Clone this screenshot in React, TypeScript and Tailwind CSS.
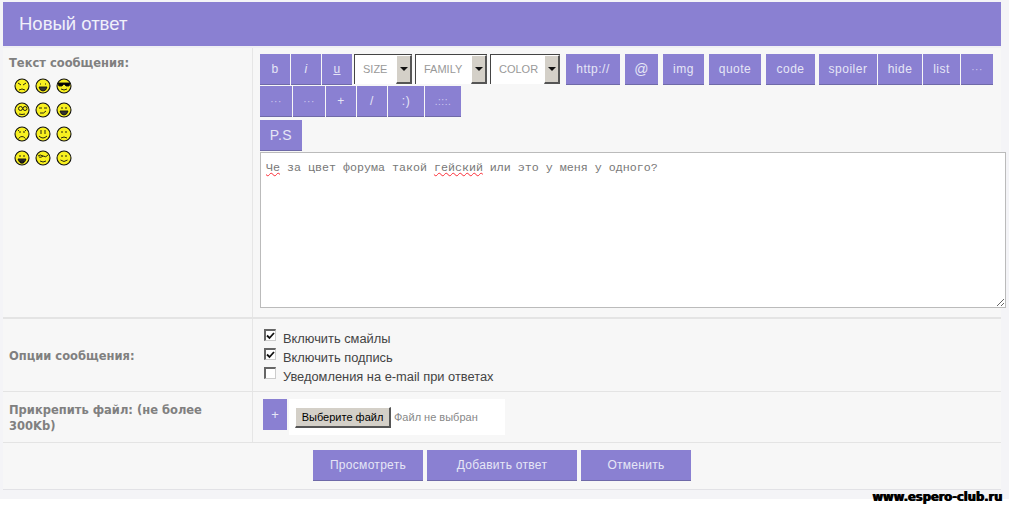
import type { ReactNode } from "react"

const btn =
  "flex h-[31px] shrink-0 items-center justify-center bg-[#8a80d2] border-b border-b-[#6f6aa8] text-[12px] tracking-[0.5px] text-[#e6e6f6]"

function Btn({ w, children }: { w: string; children: ReactNode }) {
  return <div className={`${btn} ${w}`}>{children}</div>
}

function Dim({ children }: { children: ReactNode }) {
  return <span className="text-[10px] text-[#cfcbf0]">{children}</span>
}

function FakeSelect({ w, label }: { w: string; label: string }) {
  return (
    <div className={`flex h-[30px] shrink-0 border-t border-l border-t-[#444] border-l-[#444] bg-white ${w}`}>
      <div className="flex flex-1 items-center pl-[8px] text-[11px] text-[#999]">{label}</div>
      <div className="flex w-[16px] items-center justify-center border-r-2 border-b-2 border-t border-l border-t-white border-l-white border-r-[#555] border-b-[#555] bg-[#d4d0c8]">
        <svg width="8" height="4" viewBox="0 0 8 4">
          <path d="M0 0h8L4 4z" fill="#111" />
        </svg>
      </div>
    </div>
  )
}

type Face = { eyes: string; mouth: string; extra?: string }

const faces: Face[] = [
  { eyes: "M4 5l3 2M12 5l-3 2", mouth: "M5 12q3-2 6 0" },
  { eyes: "M5 6h1M10 6h1", mouth: "M4 9h8q-1 4-4 4t-4-4z" },
  { eyes: "M2 5h12v1l-1 2h-3l-2-2-2 2H3L2 6z", mouth: "M5 11q3 2 6 0", extra: "#000" },
  { eyes: "M6.5 6.5m-2 0a2 2 0 1 0 4 0a2 2 0 1 0-4 0M11 6.5m-2 0a2 2 0 1 0 4 0a2 2 0 1 0-4 0", mouth: "M5 12q3 1 6 0" },
  { eyes: "M4 6h3M9 6h3", mouth: "M5 11q4 1 6-2" },
  { eyes: "M6 5v2M10 5v2", mouth: "M4 9h8q-1 4-4 4t-4-4z", extra: "#000" },
  { eyes: "M6 5v2M10 5v2M4 5l1-1M12 5l-1-1", mouth: "M4.5 12.5q3.5-4 7 0" },
  { eyes: "M6 4v4M10 4v4", mouth: "M4 10q4 4 8 0" },
  { eyes: "M6 5v2M10 5v2", mouth: "M5 12q3-2 6 0" },
  { eyes: "M6 5v2M10 5v2", mouth: "M4 9h8q-1 4-4 4t-4-4zM6.5 11h3v2h-3z" },
  { eyes: "M3 6q2-2 5 0t5-1M4 7q2 1 4-1", mouth: "M5 11q3 2 6 0" },
  { eyes: "M6 5v2M10 5v2", mouth: "M4.5 10q3.5 3 7 0" },
]

function Smiley({ face }: { face: Face }) {
  return (
    <svg width="16" height="16" viewBox="0 0 16 16" className="shrink-0">
      <circle cx="8" cy="8" r="7" fill="#f8f020" stroke="#111" strokeWidth="1.1" />
      <path d={face.eyes} fill={face.extra ?? "none"} stroke="#111" strokeWidth="0.9" />
      <path d={face.mouth} fill={face.mouth.endsWith("z") ? "#333" : "none"} stroke="#111" strokeWidth="0.9" />
    </svg>
  )
}

function Check({ on, label }: { on?: boolean; label: string }) {
  return (
    <div className="flex h-[19px] items-center">
      <div className="-mt-[4px] flex h-[12px] w-[12px] items-center justify-center border-t-2 border-l-2 border-t-[#666] border-l-[#666] border-r border-b border-r-[#ccc] border-b-[#ccc] bg-white">
        {on && (
          <svg width="9" height="8" viewBox="0 0 9 8">
            <path d="M1 3.5l2.5 2.5L8 1" fill="none" stroke="#111" strokeWidth="1.8" />
          </svg>
        )}
      </div>
      <span className="ml-[7px] mt-[3px] text-[12.85px] text-[#444]">{label}</span>
    </div>
  )
}

const label = "font-['DejaVu_Sans'] text-[11.5px] font-bold leading-[16px] text-[#808080]"
const actionText = "tracking-[0.3px]"

export default function App() {
  return (
    <div className="relative h-[507px] w-[1009px] overflow-hidden bg-white font-['Liberation_Sans',sans-serif]">
      <div className="h-[499px] w-[1009px] bg-[#f4f4f7] pl-[3px] pt-[2px]">
        <div className="w-[998px] border-b border-b-[#e2e2e6] bg-[#f7f7f7]">
          <div className="flex h-[44px] items-center bg-[#8a80d2] pl-4 text-[18.5px] text-[#f0f0fa]">Новый ответ</div>

          <div className="flex h-[273px] border-t-2 border-b-2 border-t-[#f0f0f4] border-b-[#e4e4e4]">
            <div className="w-[250px] shrink-0 border-r border-r-[#e6e6e6] pl-[6px] pt-[7px]">
              <div className={label}>Текст сообщения:</div>
              <div className="mt-[7px] grid w-[63px] grid-cols-3 gap-x-[5px] gap-y-[8px] pl-[5px]">
                {faces.map((f, i) => (
                  <Smiley key={i} face={f} />
                ))}
              </div>
            </div>
            <div className="relative min-w-0 flex-1 pl-[7px] pt-[6px]">
              <div className="flex items-start">
                <Btn w="w-[30px] mr-px">b</Btn>
                <Btn w="w-[30px] mr-px"><i>i</i></Btn>
                <Btn w="w-[30px] mr-[2px]"><u>u</u></Btn>
                <div className="mr-[3px]"><FakeSelect w="w-[58px]" label="SIZE" /></div>
                <div className="mr-[3px]"><FakeSelect w="w-[72px]" label="FAMILY" /></div>
                <div className="mr-[6px]"><FakeSelect w="w-[70px]" label="COLOR" /></div>
                <Btn w="w-[54px] mr-[5px]">http://</Btn>
                <Btn w="w-[33px] mr-[5px]"><span className="text-[14px]">@</span></Btn>
                <Btn w="w-[41px] mr-[5px]">img</Btn>
                <Btn w="w-[52px] mr-[5px]">quote</Btn>
                <Btn w="w-[49px] mr-[4px]">code</Btn>
                <Btn w="w-[58px] mr-px">spoiler</Btn>
                <Btn w="w-[44px] mr-px">hide</Btn>
                <Btn w="w-[37px] mr-px">list</Btn>
                <Btn w="w-[32px]"><Dim>···</Dim></Btn>
              </div>
              <div className="mt-px flex gap-px">
                <Btn w="w-[32px]"><Dim>···</Dim></Btn>
                <Btn w="w-[32px]"><Dim>···</Dim></Btn>
                <Btn w="w-[30px]">+</Btn>
                <Btn w="w-[30px]">/</Btn>
                <Btn w="w-[36px]">:)</Btn>
                <Btn w="w-[36px]"><Dim>.:::.</Dim></Btn>
              </div>
              <div className="mt-[3px] flex">
                <Btn w="w-[42px]"><span className="text-[14px]">P.S</span></Btn>
              </div>
              <div className="mt-px h-[156px] w-[746px] resize overflow-auto border border-[#bbb] bg-white px-[5px] py-[8px] font-['Liberation_Mono',monospace] text-[11.67px] leading-[14px] text-[#777]">
                <span className="underline decoration-red-500 decoration-wavy decoration-1">Че</span> за цвет форума такой{" "}
                <span className="underline decoration-red-500 decoration-wavy decoration-1">гейский</span> или это у меня у одного?
              </div>
            </div>
          </div>

          <div className="flex h-[73px] border-b border-b-[#e4e4e4]">
            <div className="flex w-[250px] shrink-0 items-center border-r border-r-[#e6e6e6] pl-[6px] pt-[2px]">
              <div className={label}>Опции сообщения:</div>
            </div>
            <div className="flex flex-col justify-center pl-[11px] pt-[2px]">
              <Check on label="Включить смайлы" />
              <Check on label="Включить подпись" />
              <Check label="Уведомления на e-mail при ответах" />
            </div>
          </div>

          <div className="flex h-[51px] border-b border-b-[#e4e4e4]">
            <div className="flex w-[250px] shrink-0 items-center border-r border-r-[#e6e6e6] pl-[6px] pr-4 pt-[2px]">
              <div className={label}>Прикрепить файл: (не более 300Kb)</div>
            </div>
            <div className="flex items-start pl-[10px] pt-[7px]">
              <div className="flex h-[31px] w-[24px] items-center justify-center bg-[#8a80d2] text-[13px] text-[#e6e6f6]">+</div>
              <div className="ml-[2px] flex h-[36px] w-[216px] items-center bg-white pl-[6px]">
                <div className="flex h-[21px] w-[96px] items-center justify-center border-r-2 border-b-2 border-r-[#555] border-b-[#555] border-t border-l border-t-white border-l-white bg-[#d4d0c8] pt-px text-[11px] text-black">
                  Выберите файл
                </div>
                <span className="ml-[3px] pt-px text-[11px] text-[#888]">Файл не выбран</span>
              </div>
            </div>
          </div>

          <div className="flex h-[46px] items-start justify-center gap-[4px] pt-[7px]">
            <Btn w="w-[110px]"><span className={actionText}>Просмотреть</span></Btn>
            <Btn w="w-[150px]"><span className={actionText}>Добавить ответ</span></Btn>
            <Btn w="w-[110px]"><span className={actionText}>Отменить</span></Btn>
          </div>
        </div>
      </div>
      <div className="absolute left-[872px] top-[490px] font-['DejaVu_Sans'] text-[11.5px] font-bold leading-[14px] text-black [text-shadow:1px_0_0_#000]">
        www.espero-club.ru
      </div>
    </div>
  )
}
